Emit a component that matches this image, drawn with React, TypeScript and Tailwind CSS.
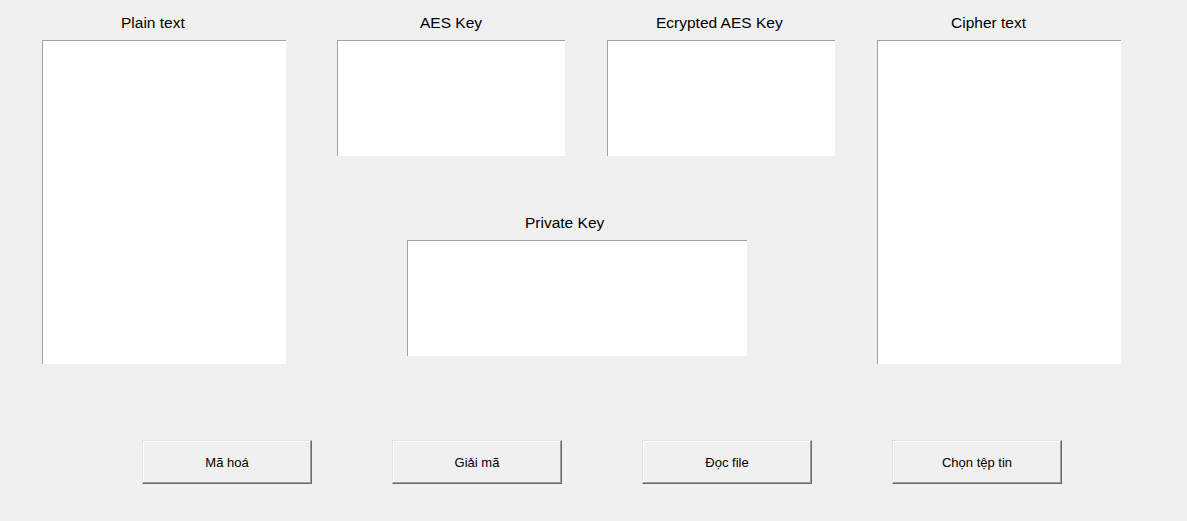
const font = { fontFamily: '"Liberation Sans", Arial, sans-serif' };

function Box({ w, h }: { w: string; h: string }) {
  return <div className={`${w} ${h} bg-white border-t border-l border-[#a0a0a0]`} />;
}

function Field({
  label,
  pad,
  w,
  h,
}: {
  label: string;
  pad: string;
  w: string;
  h: string;
}) {
  return (
    <div className="flex flex-col">
      <div className={`h-[40px] pt-[14px] text-[15.5px] leading-[17px] text-black ${pad}`}>{label}</div>
      <Box w={w} h={h} />
    </div>
  );
}

function Button({ children }: { children: string }) {
  return (
    <button className="flex h-[44px] w-[170px] items-center justify-center border border-t-[#e3e3e3] border-l-[#e3e3e3] border-r-[#696969] border-b-[#696969] bg-[#f0f0f0] text-[13px] leading-[15px] text-black shadow-[inset_-1px_-1px_0_#a0a0a0,inset_1px_1px_0_#ffffff]">
      {children}
    </button>
  );
}

export default function App() {
  return (
    <div className="h-[521px] w-[1187px] overflow-hidden bg-[#f0f0f0]" style={font}>
      <div className="flex pl-[42px]">
        <Field label="Plain text" pad="pl-[79px]" w="w-[244px]" h="h-[324px]" />

        <div className="ml-[51px] flex w-[498px] flex-col">
          <div className="flex gap-[42px]">
            <Field label="AES Key" pad="pl-[83px]" w="w-[228px]" h="h-[116px]" />
            <Field label="Ecrypted AES Key" pad="pl-[49px]" w="w-[228px]" h="h-[116px]" />
          </div>
          <div className="ml-[70px] flex flex-col pt-[58px]">
            <div className="h-[26px] pl-[118px] text-[15.5px] leading-[17px] text-black">Private Key</div>
            <Box w="w-[340px]" h="h-[116px]" />
          </div>
        </div>

        <div className="ml-[42px]">
          <Field label="Cipher text" pad="pl-[74px]" w="w-[244px]" h="h-[324px]" />
        </div>
      </div>

      <div className="mt-[76px] flex gap-[80px] pl-[142px]">
        <Button>Mã hoá</Button>
        <Button>Giải mã</Button>
        <Button>Đọc file</Button>
        <Button>Chọn tệp tin</Button>
      </div>
    </div>
  );
}
